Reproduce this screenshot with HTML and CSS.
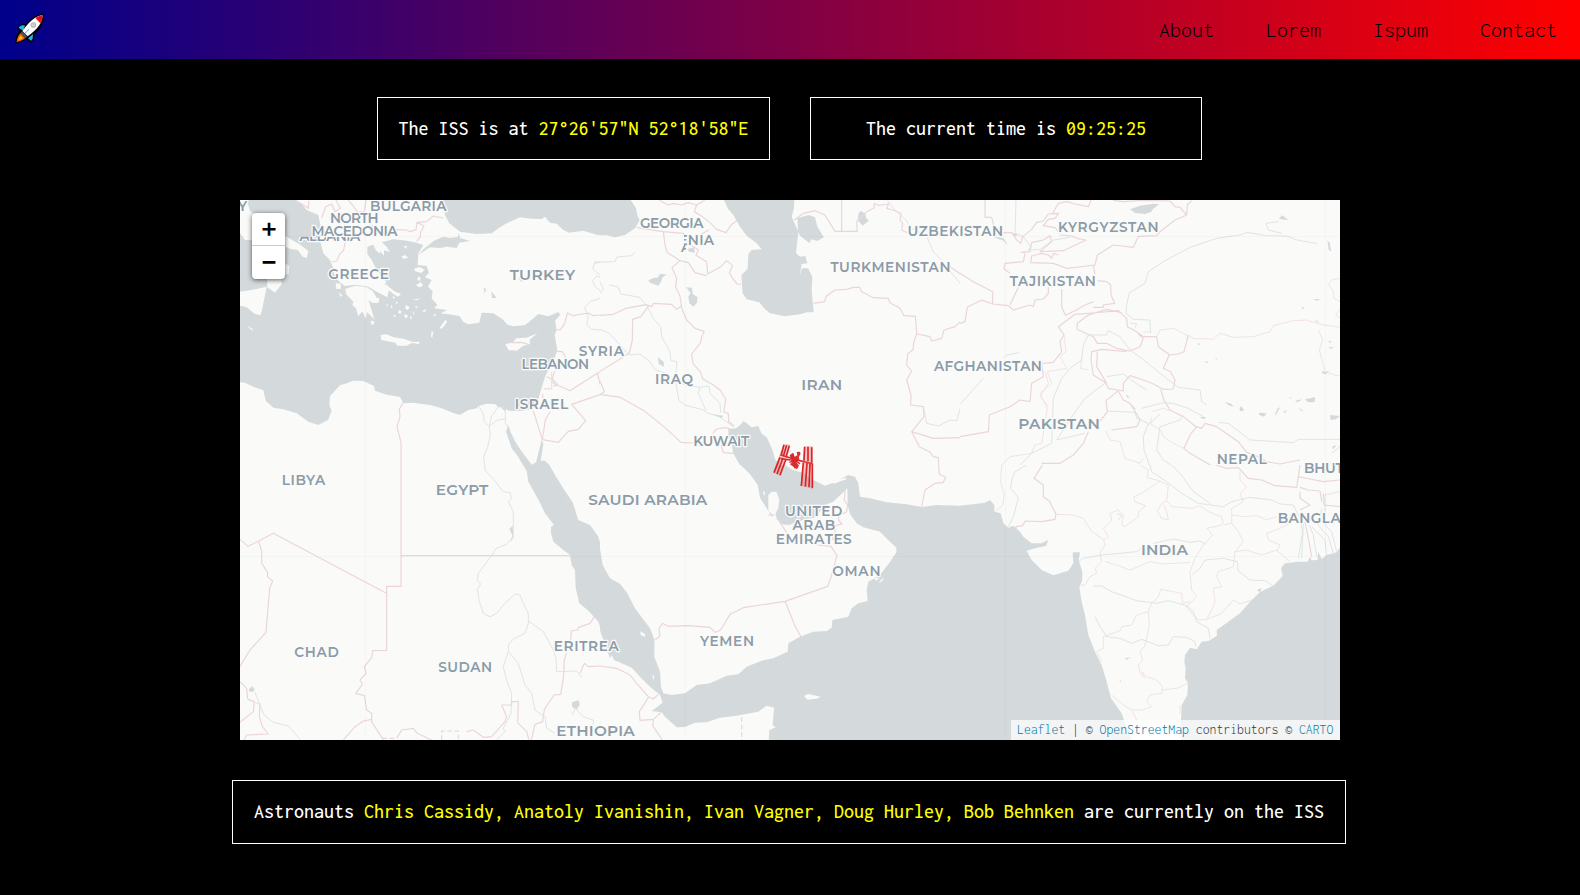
FILE: index.html
```html
<!DOCTYPE html>
<html lang="en">
<head>
<meta charset="utf-8">
<title>ISS Tracker</title>
<link rel="stylesheet" href="styles.css">
</head>
<body>
<header class="navbar">
  <a class="logo" href="#" aria-label="Home">
    <svg viewBox="0 0 90 90" width="30" height="30">
      <path d="M87 0C70 0 53 8 41 22L33 31C24 28 12 32 6 44L13 50C4 60 1 72 1 87C13 87 23 83 32 76L40 80L48 87L57 77L59 60C76 46 88 26 87 0Z" fill="#000"/>
      <path d="M30 35C21 32 14 36 11 42L25 50ZM54 60L53 74L48 80L39 73Z" fill="#28b4de"/>
      <path d="M83 4C65 6 50 14 22 51L38 67C70 44 81 27 83 4Z" fill="#fff"/>
      <path d="M83 4C75 5 67 8 61 12L76 28C81 20 83 13 83 4Z" fill="#e81123"/>
      <circle cx="55" cy="33" r="8.500" fill="#b5b8ba"/><circle cx="55" cy="33" r="5" fill="#cfcfcf"/>
      <path d="M42 46L29 59" stroke="#28b4de" stroke-width="3"/>
      <path d="M21 52L37 68L30 73L16 59Z" fill="#555"/>
      <path d="M16 58L30 73C22 80 14 83 5 84C6 75 9 66 16 58Z" fill="#f7630c"/>
      <path d="M17 65L24 72C20 76 15 78 11 78C11 73 13 69 17 65Z" fill="#ffb52e"/>
    </svg>
  </a>
  <nav class="nav-links"><a href="#">About</a><a href="#">Lorem</a><a href="#">Ispum</a><a href="#">Contact</a></nav>
</header>
<main class="content">
  <section class="stats">
    <p class="panel stat">The ISS is at <span class="value">27°26'57"N 52°18'58"E</span></p>
    <p class="panel stat">The current time is <span class="value">09:25:25</span></p>
  </section>
  <section class="map">
    <svg class="map-canvas" viewBox="240 200 1100 540" width="1100" height="540">
      <!-- eastern Mediterranean, Balkans, Turkey -->
      <svg x="230" y="190" width="370" height="275" viewBox="0 0 1110 825">
        <path class="water" d="M638 30L645 75L658 100L690 125L740 132L785 130L808 113L830 100L870 82L905 86L935 87L945 80L960 98L980 101L1000 120L1018 128L1060 122L1100 134L1112 136V30ZM686 128L690 144L720 153L688 158L680 174L650 170L630 174L600 172L565 195L580 178L612 152L640 140L660 144L683 141Z"/>
        <path class="water" d="M50 30H195L215 42L230 60L265 75L270 100L275 130L272 160L280 190L300 210L310 235L312 253L328 275L345 288L375 284L415 290L440 305L472 322L477 300L452 286L470 278L440 240L425 210L412 192L412 170L430 164L437 180L450 192L450 182L462 198L462 181L480 186L470 170L455 157L490 148L530 152L560 158L580 165L565 190L563 225L590 228L597 248L585 262L605 270L594 290L608 304L605 325L622 345L612 355L652 360L632 370L656 373L688 378L700 396L715 403L748 398L755 368L790 370L818 388L832 404L850 409L885 405L905 389L925 372L955 379L985 366L991 374L975 393L980 420L974 434L982 480L975 500L960 530L945 560L930 610L918 650L905 658L870 663L835 662L820 650L805 652L795 642L770 641L745 648L740 655L715 660L690 675L670 669L635 655L600 645L550 638L520 640L510 621L470 614L435 602L432 588L400 573L370 572L350 580L330 586L300 618L298 645L305 662L294 690L265 705L235 695L200 670L160 658L130 653L107 632L100 601L70 590L45 578L30 577V348L98 350L110 290L135 308L155 282L152 255L176 253L178 228L166 220V170L180 176L203 180L218 200L230 204L235 183L212 165L170 140L110 100L60 62Z"/>
        <path class="water" d="M30 130L45 150H66L110 230L112 292L30 305Z"/>
        <path class="land" d="M30 306L62 302L110 290L95 325L98 350L92 376L75 372L50 352L30 346ZM346 297L375 287L410 292L428 303L440 323L448 325L446 338L428 339L416 330L420 345L433 388L411 366L407 386L397 364L385 379L378 355L367 345L370 335L348 312ZM452 435L470 433L490 442L520 446L548 456L569 455L567 462L545 459L530 467L502 467L496 458L454 450ZM826 463L850 456L858 445L890 443L922 430L899 449L900 462L880 467L860 482L836 481ZM446 270L470 285L495 305L509 311L503 320L475 300L447 284ZM551 237L568 231L584 240L573 249L556 244ZM558 286L572 276L579 287L568 292ZM565 259L572 264L569 273L562 269ZM630 412L646 390L652 394L640 412L631 417ZM604 425L610 424L607 443L603 440ZM53 407L67 416L68 423L57 413ZM317 280L332 281L333 296L319 297ZM325 307L338 316L333 321ZM422 392L433 394L431 404L424 403ZM480 300L513 311L507 319L489 312ZM487 318L495 322L492 328ZM527 345L539 351L534 360L526 357ZM507 360L515 364L511 372L504 368ZM524 373L534 376L530 385L523 381ZM482 345L488 350L484 356ZM497 334L504 338L499 343ZM555 350L563 347L559 356ZM549 329L572 325L560 331ZM575 363L590 357L584 366ZM610 374L620 372L612 380ZM515 199L526 195L534 203L519 207ZM520 168L532 169L528 176ZM541 377L547 382L542 390ZM469 340L474 346L471 350ZM550 362L554 374L549 372ZM490 374L499 377L493 382Z"/>
        <path class="water" d="M828 725L835 705L842 727L858 759L878 788L905 824L918 817L930 770L935 748L940 762L932 812L945 812L960 827H880L863 798L845 775L835 745ZM761 292L768 298L764 313ZM784 304L800 324L786 324ZM865 262L880 275L870 273ZM807 647L828 655L826 665Z"/>
        <path class="river" d="M746 648L760 672L763 697L778 710L781 735L773 770L761 800L764 830M778 708L800 691L827 686M778 708L785 678L805 650M826 660V700L835 712M965 545V600M1200 497L1178 468L1150 440L1120 420L1085 418L1070 405L1075 380L1063 352L1082 334L1115 323L1122 310L1095 290L1088 272L1100 258L1112 263M1110 255L1088 237L1095 215L1115 217M1110 215L1092 222M1112 295L1120 300"/>
        <path class="border" d="M195 30L215 42L235 55L237 32M275 84L287 50L305 42L315 65L331 55L318 31M355 31L370 48L383 67L403 64L408 30M346 155L341 180L328 194L321 213L306 216M498 119L530 120L540 125L558 119L561 97L590 95L610 78L640 84M561 97L582 108L572 127L570 142L560 154M840 458L875 457L895 463M845 482L857 484M980 420L992 419L1004 400L1012 369L1030 377L1075 369L1090 377L1110 375M980 484L997 485L1008 505M975 544L968 560L970 580L1020 602L1102 550L1115 600L1110 614L1025 643L1067 692L1045 718L1015 724L985 757L937 749L910 663M1102 550L1200 495M960 665L946 690L937 749M950 560L967 568L982 583L970 590M941 597L962 596M938 611V625M519 638L508 658L510 680L501 710L513 757V830M425 105L430 112"/>
      </svg>
      <!-- Caucasus, Iran, Central Asia -->
      <svg x="600" y="190" width="360" height="275" viewBox="0 0 1080 825">
        <path class="water" d="M0 30H92L108 55L112 75L119 91L105 115L75 135L45 142L20 136L0 136ZM372 30H583L582 55L575 80L588 110L595 125L588 190L600 200L616 198L622 220L605 222L599 260L606 235L624 235L637 260L635 300L641 367L620 367L600 373L555 379L510 370L492 355L478 337L440 328L428 310L424 255L443 236L445 192L455 180L485 178L470 160L440 137L420 110L400 75L385 58ZM592 85L625 75L645 82L652 110L672 142L652 153L635 148L628 159L600 137L594 124ZM783 62L796 71L797 82L806 92L788 107L773 91L776 70ZM145 271L163 263L173 263L180 252L200 253L187 263L183 275L175 287L150 278ZM258 292L276 293L278 312L293 322L291 338L280 350L268 340L265 319L272 310ZM261 178L282 172L285 188L268 185ZM174 501L192 517L191 530L176 522ZM385 718L408 715L424 702L430 693L440 700L455 712L475 708L485 731L500 742L516 776L526 810L550 830H422L399 788L395 760L385 740ZM332 672L369 677L366 684ZM194 582L210 589Z"/>
        <path class="border" d="M178 31L205 45L220 40L245 45L265 38L290 45L314 31M290 45L283 65L310 82L330 98L350 118L378 128L395 103L410 93M110 112L125 115L190 125L195 165L202 188L225 202L240 212L216 233L230 265L227 292L240 318L245 355L260 390L285 415L313 424L305 440L302 458L275 492L279 520L302 547L308 567L340 585L360 600L377 627L371 666L385 670L386 695L403 708M190 125L250 130L262 158L295 180L288 196L320 215L323 252L360 232L380 212L398 227L388 248L400 268L412 282L423 283M262 158L300 135L326 120M240 212L265 218L285 248L320 257M0 376L40 373L75 356L137 344L155 350L160 340L215 343L230 358L245 347M145 350L122 380L98 388L97 450L88 490L0 544M0 573L13 605L0 613L60 622L132 662L195 713L243 757L278 759M338 730L350 717L375 713L392 717M363 765L370 788L402 790M583 90L610 70L645 62L675 75L705 124H772L770 95L800 65L822 54L823 40L835 46L866 42L860 55L878 60L903 70L900 90L908 100L905 120L921 128M725 30V122M641 340L673 335L680 318L705 300L740 298L760 292L779 292L785 305L820 323L865 325L870 338L900 355L912 377L946 379L950 430L940 463L940 478L923 492L920 525L935 543L920 570L933 615L932 645L970 650L972 680L935 725L958 770L988 785L1000 800L1015 803L1016 830M950 432L990 440L995 453L1025 445L1032 420L1065 410L1090 387M935 725L1000 745L1080 743M1050 230L1100 265"/>
        <path class="river" d="M0 216L45 215L50 201L95 197L105 188M0 275L10 295L0 310M28 285L55 291L62 312L120 322L145 355L160 385L182 410L185 440L210 485L213 512L231 515L226 570L237 632L255 645L310 660L325 670L358 680L400 710M0 418L28 430L55 460L88 495L120 492L150 515L165 540L195 548M245 582L275 588L300 592L295 610L317 660M300 592L327 588L330 610L360 640L362 668M862 32L885 60L920 92L930 112L965 130M982 143L1000 185L1025 210M1050 243L1080 280M972 656L980 700L1015 708L1050 690L1070 692L1085 640L1110 610"/>
      </svg>
      <!-- Kyrgyzstan, Tibet, Pakistan -->
      <svg x="960" y="190" width="380" height="275" viewBox="0 0 1140 825">
        <path class="water" d="M510 58L540 47L580 41L598 43L580 56L573 66L555 72L525 69ZM98 141L130 143L143 165L130 152ZM155 130L178 132L165 139ZM957 87L966 76L986 90ZM1102 151L1109 158L1114 185L1106 179ZM1060 327L1083 328L1070 332ZM1023 354L1034 351L1030 358ZM897 668L920 670L912 680L898 675ZM945 675L953 655L960 652L948 676ZM970 665L980 660L975 670ZM1005 632L1028 628L1012 637ZM1035 628L1065 622L1064 636L1044 637ZM1016 653L1035 666L1020 660ZM1110 675L1140 678L1128 688L1112 690ZM795 636L812 641L822 650L806 646ZM838 658L843 648L853 661L842 664ZM712 460L724 462L715 465ZM732 514L747 515L740 519ZM765 501L773 509L768 508ZM912 720L915 728ZM988 622L995 623L991 627ZM1105 452L1118 456L1108 458ZM1107 470L1125 473L1110 476ZM1086 543L1098 546L1108 541L1098 553L1088 551ZM718 681L738 681L732 688ZM497 612L509 622L502 623ZM1065 389L1080 397L1070 396ZM1047 485L1060 487ZM1116 770L1130 765L1120 778ZM515 645L528 656L520 656Z"/>
        <path class="border" d="M75 30V82H95L102 110L128 128H155L170 150L182 160L188 140L215 118L230 97L250 93L265 72L296 70L285 85L265 88L250 107L285 113L300 130M278 70L295 40L320 35L345 42L385 50L393 30M460 31L490 35L545 31L630 33L645 50L660 52L680 75L682 45L695 32M680 75L645 90L600 125L590 137L535 139L520 172L460 165L412 195L405 225L320 235L280 220L212 218L215 198L245 190L265 195L275 205L280 190L295 195M182 187L210 185L215 158L250 150L270 137L275 155L240 185L310 182L378 150L350 145L335 138L300 135M195 190L190 215L135 220L132 237L150 250M400 225L405 253M412 272L440 275L452 285L453 315L464 340L430 345L430 352L400 352M400 335L375 345L345 362L316 376L305 350V297M0 250L40 275L98 305V342L145 347L160 360L210 345L220 350L225 330L250 327L265 310L265 292M150 345L175 292M0 400L15 395L22 352L65 330L95 341M0 740L85 725L88 675L150 650L180 630L210 635L215 580L250 560L245 520L280 517L305 485L300 455L312 435L295 410L345 373L400 369L475 362L500 385L502 410L530 425L550 440L590 440L595 470L630 495L655 492L672 485L685 435M351 418L352 400L385 375L440 358L485 368M351 418L400 440L412 460L440 460L470 475L510 483L540 470L550 445L535 432M500 485L425 478L395 485L393 510L400 555L437 578L445 595L490 603L490 580L510 557L550 570L580 582L610 598L640 597L645 570L632 545L610 535L628 495M412 485L410 530L440 580M475 602L438 632L442 665L420 695M602 598L612 630L630 660L670 680L705 708L725 715L735 700L770 710L835 755L860 787L895 800L920 815L960 822L1020 810M710 710L690 735L672 775L690 790L760 830M385 725L370 760L340 795L300 820L245 820M455 720L530 710L540 690L520 655L510 640L490 630L475 604"/>
        <path class="border fine" d="M510 400L530 400L525 415M570 425L550 427M590 440L600 420L640 415L670 430L690 440L700 446L760 447L780 430L820 442L880 440L930 425L940 407L1000 392L1040 390L1080 403L1140 412M1075 420L1088 450L1078 480L1095 545L1125 555L1140 558M1140 265L1115 270L1105 283L1120 305L1122 325L1140 335M1140 360L1127 375L1140 385M312 435L318 485L300 500L320 535L262 545L275 580L240 610L262 655L245 760L225 765L215 790L150 800L125 825M365 505L362 535L385 540M437 722L450 750L480 755L495 805L540 820L550 805M575 682L570 700L600 720L610 740L640 760L672 775M575 665L610 655L640 665M255 545L265 580L240 620L265 650"/>
        <path class="river" d="M168 30L165 130L190 140L212 170L205 180L240 178L280 150L330 142M385 435L370 465L365 510L330 535L305 565L280 625L275 760L215 790L185 820L170 840M385 435L440 435L445 422L480 440L510 480L545 505L600 550L655 592L720 600L725 635L740 645M435 580L375 625L335 680L290 750M440 560L490 552L535 585L560 600M290 750L375 730M440 663L525 667L530 685L565 700L550 740L552 780L570 830M600 672L565 705M668 675L660 690L600 710L590 780L610 810L640 830M545 655L610 638L640 640L685 655L730 680M500 345L498 370L520 388L570 390L572 430M500 345L508 308L555 280L565 245L610 215L690 172L770 145L840 135L860 127L920 137L980 138L1010 150L1070 160M965 130L925 120L918 100L955 95M775 697L805 700L870 750L1000 758L1015 748H1140M130 505L140 495L178 488M0 643L70 565M1115 790L1140 770"/>
      </svg>
      <!-- Libya, Egypt, Sudan -->
      <svg x="230" y="465" width="370" height="275" viewBox="0 0 1110 825">
        <path class="water" d="M878 -2H957L975 30L1003 75L1028 112L1037 140L1045 165L1080 180L1105 215L1115 250V500L1105 470L1075 437L1048 415L1037 370L1035 315L1025 300L1020 270L1000 255L970 230L963 205L963 185L972 180L945 145L930 113L895 50L890 18ZM57 672L66 664L75 674L66 682L57 678ZM1026 712L1045 706L1050 717L1040 734L1026 725ZM838 192L848 182L850 220L840 230L848 212Z"/>
        <path class="river" d="M764 0L765 15L790 42L820 80L840 83L845 100L835 110L850 140V215L830 238L798 250L785 272L745 325L742 345L752 357L742 372L748 410L760 445L780 455L800 445L820 420L855 387L870 390L880 415L895 445V475L885 505L850 522L835 540L836 555L820 605L828 640L845 685L843 745L820 790L825 800L800 825M836 560L865 595L885 660L905 685L915 735L945 755L950 790L975 805M895 468L940 500L970 555L978 580L980 620L1040 618L1055 637M1035 733L1025 750M1040 735L1060 755L1090 765V780M75 682L90 720L102 750L130 772L175 783L212 825M55 705L90 718M1010 95L1020 112"/>
        <path class="border" d="M30 223L54 244L86 228L130 205L469 385M86 228L95 260V295L113 322L112 335L128 348L119 370L108 502L60 555L35 595L30 605M513 0V364H470V556L428 557L425 578L403 605L408 625L390 645L397 658L377 685L403 692L410 735L425 745L425 770L457 820L460 830M513 272H1020M1093 455L1080 475L1045 488L1043 495L1024 498L1022 527M1010 563L1003 585L1000 640L992 688L972 690L943 733L938 770L915 778L903 830M1050 625L1063 595L1075 605L1110 603M30 650L50 670L53 702L73 710L70 740L30 772M90 715L88 755L97 785L115 807L50 810L40 830M340 825L375 785L400 768L425 763M500 820L515 795L550 790L562 805L605 825M710 800L730 795L760 817L785 815L825 770L830 755L815 720H845V710H865L863 773L890 800L897 825"/>
        <path class="border dashed" d="M457 820H500M635 825V798H685V825"/>
      </svg>
      <!-- Arabian peninsula -->
      <svg x="600" y="465" width="360" height="275" viewBox="0 0 1080 825">
        <path class="water" d="M420 -2H550L579 15L604 22L640 45L675 62L700 53L745 30L765 35L775 55L780 95L810 100L860 112L920 118L965 126L1010 120L1080 122V840H505L508 795L527 787L518 780L522 728L500 722L475 740L410 752L360 758L320 772L285 773L255 786L230 787L195 755L185 742L155 738L188 713L180 690L150 665L120 635L95 608L65 595L42 585L35 570L30 580L10 525L-2 490V240L8 300L30 340L60 356L82 385L105 430L150 490L163 523L163 575L180 620L183 665L190 685L215 690L255 685L290 660L330 655L350 646L380 632L415 628L440 605L485 587L520 580L563 560L565 535L600 515L640 500L680 498L695 488L697 465L745 455L755 430L775 415L803 408L800 375L805 350L840 330L870 290L889 262V248L870 230L840 200L790 187L770 175L750 147L743 120L742 70L700 110L670 122L650 155L590 170L568 180L545 178L530 162L527 145L515 155L505 138L480 98L473 60L450 28Z"/>
        <path class="land" d="M505 90L515 80L529 80L538 103L535 130L522 154L505 137ZM695 50L735 38L740 42L702 56ZM612 693L625 687L662 695L650 701L622 704ZM490 77L495 82L494 93L490 87ZM120 499L135 507L135 516L123 511ZM838 350L852 337L848 347L838 354ZM822 338L838 340L828 348ZM157 630L163 633L160 646Z"/>
        <path class="border" d="M535 165L560 203M735 75L733 105L743 120L740 140L728 147M716 155L715 165L726 177L705 182L705 200L697 225M652 240L693 244L711 272L692 340L683 364L555 409L430 428L390 448L362 495L345 502L330 487L265 482L205 484L188 475L177 490L180 513L165 525M555 409L585 483L603 515M505 150H525M965 125L975 75L1005 55L1030 52L1037 37L1018 28L1016 0M0 603L50 610L90 630L110 655L145 695L160 702L175 688M145 698L118 740L120 766L160 763L183 742M160 765L158 782L187 825"/>
        <path class="border dashed" d="M425 757V825"/>
      </svg>
      <!-- India -->
      <svg x="960" y="465" width="380" height="275" viewBox="0 0 1140 825">
        <path class="water" d="M-2 122L40 118L75 113L90 105L103 120V140L122 145L130 175L145 188L160 182L180 200L190 215L215 235L245 235L265 224L258 243L225 250L200 257L215 285L245 315L280 331L325 317L340 295L338 262L360 262L356 286L367 320L366 348L358 365L365 410L375 450L385 510L405 560L425 600L440 650L453 700L485 745L500 790L518 830H-2ZM1142 245L1130 262L1100 270L1085 282L1075 260L1072 285L1055 286L1050 275L1043 290L1015 290L975 295L963 310L968 333L940 362L900 381L870 410L840 445L805 470L770 495L771 512L745 528L725 530L710 553L690 548L675 570L673 590L677 610L675 640L684 655L682 690L665 720L662 790L665 840H1142ZM495 580L512 576L498 585ZM890 375L905 370L900 382ZM478 648L484 645L481 652ZM518 698L523 701Z"/>
        <path class="border" d="M247 0L222 40L250 60L250 95L268 108L288 148L285 163L245 170L195 168L188 182L168 185L168 195M767 0L800 10L835 8L865 40L905 45L945 62L1010 67L1020 0M1015 35L1050 42L1090 50L1140 45M1020 67L1045 75L1080 78L1085 110M1020 80L1020 100L1050 120L1020 135M1090 85L1092 120L1140 125M1035 170L1045 220L1055 275"/>
        <path class="border fine" d="M125 0L122 50L133 90L128 120L107 138M288 148L340 150L370 160L395 200L430 222L435 240L420 262L425 290L405 310L410 325L390 335L375 360L360 360M540 0L565 15L562 38L600 48L625 60L620 108L605 115L592 138L605 160L625 165L620 140L612 120M600 48L545 85L522 95L525 110L557 122L535 140L535 155L495 185L485 180L490 150L475 135L450 145L455 165L430 190L445 215L432 225M620 108L635 125L700 130L720 122L745 140L785 155L790 175L775 183L740 190L758 210L730 240L705 280L690 320L695 375L710 395L680 425L700 450L715 465L740 463L755 435L765 410L760 370L785 365L770 335L775 320L820 305L825 260L850 230L835 200L815 175L790 180M435 290L470 300L510 315L570 290L610 297L690 292M825 260L860 255L905 270L950 255L990 290M815 175L815 130L850 110L840 85L860 65L840 45L840 20M815 150L855 155L890 152L920 165L950 155M990 175L960 190L920 205L925 225L960 240L950 260M740 463L785 445L820 405L840 417L875 405M690 410L668 415L665 385L630 378L602 373L595 395L575 415L565 440L530 450L515 480L485 485L480 497L430 515L430 550L410 560L425 590M565 440L568 480L560 520L553 545L540 560L548 585L535 600L540 625L555 640L545 620L560 635L590 645L607 665L605 685L570 690L560 710L575 725L545 735L515 735L490 720L455 690M607 675L650 670L685 655M515 735L530 765M660 720V745"/>
        <path class="river" d="M200 0L165 20L155 45L152 70L175 98L160 155L145 185M570 0L575 20L620 50L665 85L715 115L790 125L815 110L870 97L935 105L960 117L1000 120L1020 160L1028 200L1015 280M635 0L660 25L700 80L750 115M355 290L370 280L425 270L530 260L545 250M580 235L640 222L690 232L720 228L738 238M400 363L425 363L455 380L530 407L590 415L625 407L680 422L700 440L710 470L745 490L750 520M405 455L420 485L440 515L480 520L515 535L545 523L595 542L625 540L640 515L680 517L705 530L707 545M697 330L720 310L735 285L790 280L832 290L835 318L870 345L915 347L940 363M470 145L485 150L475 165M1048 180L1060 210L1070 275M1070 175L1105 215L1120 265M1085 130L1080 165L1115 200L1130 260M1140 80L1095 90V165M1030 175L1025 280M1055 185L1095 225L1100 270"/>
      </svg>
      <path class="tile-grid" d="M365.500 200V740M685.500 200V740M1005.500 200V740M1325.500 200V740M240 236.500H1340M240 556.500H1340"/>
      <g class="labels">
        <text x="238" y="210.500">Y</text>
        <text x="370" y="210.500" textLength="76.500">BULGARIA</text>
        <svg x="295" y="237" width="75" height="8" viewBox="295 237 75 8"><text x="299.500" y="240.500" textLength="60.700">ALBANIA</text></svg>
        <text x="330" y="223" textLength="48.700">NORTH</text>
        <text x="311.500" y="236" textLength="86">MACEDONIA</text>
        <text x="328.300" y="278.500" textLength="60.500">GREECE</text>
        <text class="big" x="509.700" y="279.500" textLength="65.500">TURKEY</text>
        <text x="578.700" y="356" textLength="45.300">SYRIA</text>
        <text x="521.500" y="369" textLength="67.500">LEBANON</text>
        <text x="514.700" y="408.700" textLength="53.500">ISRAEL</text>
        <text x="640" y="228.300" textLength="63.500">GEORGIA</text>
        <svg x="684" y="234" width="35" height="14" viewBox="684 234 35 14"><text x="678.500" y="245" textLength="35.500">ENIA</text></svg>
        <svg x="680" y="245" width="6" height="9" viewBox="680 245 6 9"><text x="681" y="252">A</text></svg>
        <text x="907.500" y="235.500" textLength="95.500">UZBEKISTAN</text>
        <text x="830.500" y="271.700" textLength="120">TURKMENISTAN</text>
        <text x="655" y="383.700" textLength="38">IRAQ</text>
        <text class="big" x="801.200" y="389.700" textLength="41">IRAN</text>
        <text x="933.900" y="371" textLength="108">AFGHANISTAN</text>
        <text x="693.200" y="445.500" textLength="56">KUWAIT</text>
        <text x="1058" y="231.700" textLength="100.500">KYRGYZSTAN</text>
        <text x="1009.800" y="285.700" textLength="86">TAJIKISTAN</text>
        <text class="big" x="1018.300" y="429.300" textLength="81.500">PAKISTAN</text>
        <text x="1216.700" y="463.700" textLength="50">NEPAL</text>
        <text x="1304" y="473" textLength="60">BHUTAN</text>
        <text x="1277.700" y="523" textLength="105">BANGLADESH</text>
        <text class="big" x="1140.900" y="555.300" textLength="47">INDIA</text>
        <text x="281.700" y="484.700" textLength="43.500">LIBYA</text>
        <text class="big" x="435.700" y="495.300" textLength="52.500">EGYPT</text>
        <text class="big" x="588.300" y="505.300" textLength="119">SAUDI ARABIA</text>
        <text x="294.200" y="657" textLength="44.500">CHAD</text>
        <text x="438.300" y="672.300" textLength="53.700">SUDAN</text>
        <text x="553.700" y="651" textLength="65">ERITREA</text>
        <text class="big" x="556.300" y="736.300" textLength="78.500">ETHIOPIA</text>
        <text x="784.900" y="515.500" textLength="57.300">UNITED</text>
        <text x="792.500" y="529.500" textLength="42.700">ARAB</text>
        <text x="775.700" y="543.800" textLength="76">EMIRATES</text>
        <text x="832.200" y="576.200" textLength="48.300">OMAN</text>
        <text x="700" y="645.500" textLength="54">YEMEN</text>
      </g>
      <!-- station marker -->
      <svg x="760" y="430" width="70" height="70" viewBox="0 0 210 210" class="station">
        <path d="M62 75L92 84M112 90L156 101M62 86L92 90" stroke-width="5"/>
        <path d="M70 43H90L60 137L39 128ZM132 49H159V175L122 168Z" class="station-panel"/>
        <path d="M72 44L63 77M80 46L70 79M88 47L78 82M60 82L42 128M69 84L51 132M78 87L60 136M134 50L132 92M144 50V94M155 52V98M130 98L124 168M141 99L136 170M150 101L147 172M157 100V175" stroke-width="5"/>
        <path class="station-hub" d="M92 72L100 70L104 80L112 76L110 66L119 65L122 70L117 81L118 90L110 97L117 107L111 118L101 111L90 103L96 96L90 87Z"/>
        <path d="M90 76L120 102M88 97L111 88M98 70L105 115" stroke-width="4"/>
      </svg>
    </svg>
    <div class="zoom-control"><a href="#" aria-label="Zoom in">+</a><a href="#" aria-label="Zoom out">−</a></div>
    <div class="attribution"><a href="#">Leaflet</a> | © <a href="#">OpenStreetMap</a> contributors © <a href="#">CARTO</a></div>
  </section>
  <p class="panel crew">Astronauts <span class="value">Chris Cassidy, Anatoly Ivanishin, Ivan Vagner, Doug Hurley, Bob Behnken</span> are currently on the ISS</p>
</main>
</body>
</html>
```
FILE: styles.css
```css
* { box-sizing: border-box; }

body {
  margin: 0;
  height: 895px;
  overflow: hidden;
  background: #000;
  color: #fff;
  font-family: Inconsolata, "DejaVu Sans Mono", monospace;
}

a { text-decoration: none; }

.navbar {
  display: flex;
  align-items: center;
  justify-content: space-between;
  height: 59px;
  padding: 0 23px 0 15px;
  background: linear-gradient(to right, darkblue, red);
}

.logo, .logo svg { display: block; }
.logo { margin-top: -1px; }

.nav-links {
  display: flex;
  gap: 52px;
  padding-bottom: 1px;
  font-size: 22px;
  font-weight: 300;
}

.nav-links a { color: #000; }

.content {
  display: flex;
  flex-direction: column;
  align-items: center;
  gap: 40px;
  padding-top: 38px;
}

.stats {
  display: grid;
  grid-template-columns: 393px 392px;
  gap: 40px;
  padding-right: 1px;
}

.panel {
  display: flex;
  justify-content: center;
  align-items: center;
  height: 63px;
  margin: 0;
  border: 1px solid #fff;
  font-size: 20px;
  font-weight: 550;
  white-space: pre;
}

.crew {
  width: 1114px;
  height: 64px;
  margin-right: 2px;
  padding-bottom: 2px;
}

.value { color: #ff0; }

.map {
  position: relative;
  width: 1100px;
  height: 540px;
  overflow: hidden;
  background: #fafaf8;
}

.map-canvas { display: block; }
.map-canvas svg { overflow: hidden; }

.water { fill: #d4dadc; stroke: none; }
.land { fill: #fafaf8; }
.border { fill: none; stroke: #ebd5d9; stroke-width: 3.500; stroke-linejoin: round; }
.border.fine { stroke: #f0dfe2; stroke-width: 2.600; }
.border.dashed { stroke-dasharray: 14 8; }
.river { fill: none; stroke: #dae1e4; stroke-width: 2.600; stroke-linejoin: round; }
.tile-grid { fill: none; stroke: #000; stroke-opacity: .018; }

.labels text {
  font-family: Montserrat, Inter, sans-serif;
  font-size: 13.700px;
  font-weight: 600;
  fill: #8b9ba8;
  stroke: #fafaf8;
  stroke-width: 2.500px;
  stroke-linejoin: round;
  paint-order: stroke;
}

.labels .big { font-size: 15.300px; }

.station path { fill: none; stroke: #d92528; }
.station .station-hub { fill: #dc3034; stroke: none; }
.station .station-panel { fill: #e66; fill-opacity: .35; stroke: none; }

.zoom-control {
  position: absolute;
  top: 13px;
  left: 12px;
  display: flex;
  flex-direction: column;
  width: 33px;
  border-radius: 4px;
  background: #fff;
  box-shadow: 0 1px 5px rgba(0, 0, 0, .65);
}

.zoom-control a {
  height: 33px;
  padding-left: 1px;
  color: #000;
  font: 450 27px/29px Inter, sans-serif;
  text-align: center;
}

.zoom-control a:first-child { border-bottom: 1px solid #ccc; }

.attribution {
  position: absolute;
  right: 0;
  bottom: 0;
  height: 20px;
  width: 329px;
  padding-left: 6px;
  background: rgba(255, 255, 255, .7);
  color: #333;
  font-size: 13.750px;
  font-weight: 300;
  line-height: 20px;
  white-space: nowrap;
}

.attribution a { color: #0078a8; }
```
